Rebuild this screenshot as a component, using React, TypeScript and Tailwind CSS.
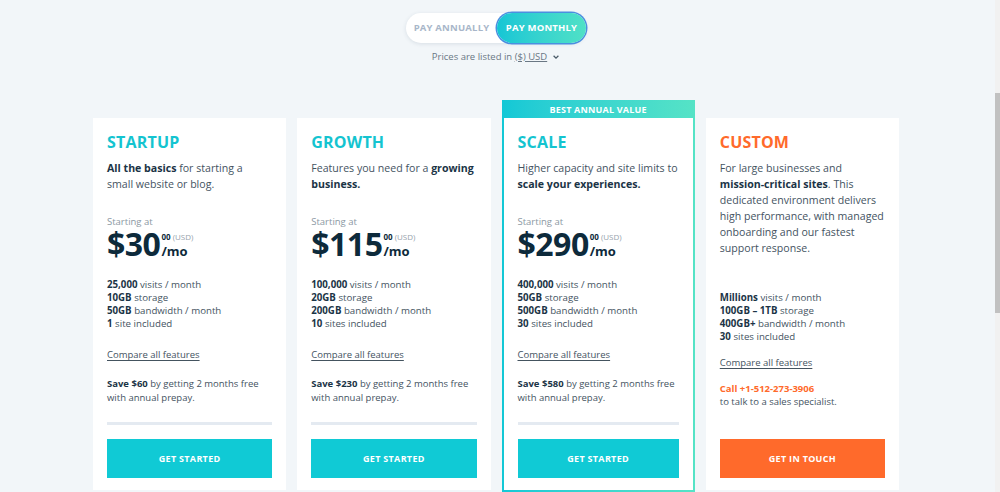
import React from "react"

interface Plan {
  name: string
  desc: React.ReactNode
  price: string
  features: [string, string][]
  save: string
}

const plans: Plan[] = [
  {
    name: "STARTUP",
    desc: (
      <>
        <b className="font-bold text-[#1b3446]">All the basics</b> for starting a
        <br />
        small website or blog.
      </>
    ),
    price: "$30",
    features: [
      ["25,000", "visits / month"],
      ["10GB", "storage"],
      ["50GB", "bandwidth / month"],
      ["1", "site included"],
    ],
    save: "$60",
  },
  {
    name: "GROWTH",
    desc: (
      <>
        Features you need for a <b className="font-bold text-[#1b3446]">growing business.</b>
      </>
    ),
    price: "$115",
    features: [
      ["100,000", "visits / month"],
      ["20GB", "storage"],
      ["200GB", "bandwidth / month"],
      ["10", "sites included"],
    ],
    save: "$230",
  },
  {
    name: "SCALE",
    desc: (
      <>
        Higher capacity and site limits to <b className="font-bold text-[#1b3446]">scale your experiences.</b>
      </>
    ),
    price: "$290",
    features: [
      ["400,000", "visits / month"],
      ["50GB", "storage"],
      ["500GB", "bandwidth / month"],
      ["30", "sites included"],
    ],
    save: "$580",
  },
]

function Features({ items }: { items: [string, string][] }) {
  return (
    <div className="text-[9.7px] leading-[13px] text-[#44535f]">
      {items.map(([b, rest]) => (
        <div key={b + rest}>
          <b className="font-bold text-[#1b3446]">{b}</b> {rest}
        </div>
      ))}
    </div>
  )
}

function PlanBody({ plan }: { plan: Plan }) {
  return (
    <div className="flex flex-col h-full bg-white px-[14px] pt-[14px] pb-[12px]">
      <h2 className="text-[16px] leading-[20px] font-bold text-[#14c4d0] tracking-[0.2px]">{plan.name}</h2>
      <p className="mt-[8px] text-[10.6px] leading-[16px] text-[#44535f]">{plan.desc}</p>
      <div className="mt-[23px] text-[9.5px] leading-[14px] text-[#8b98a3]">Starting at</div>
      <div className="flex items-start text-[#0d2a3b]">
        <span className="text-[32px] leading-[30px] font-bold tracking-[-0.5px]">{plan.price}</span>
        <div className="flex flex-col ml-[1px] mt-[3px]">
          <span className="text-[8px] leading-[10px] font-bold">
            00 <span className="font-normal text-[#97a3ad]">(USD)</span>
          </span>
          <span className="text-[13px] leading-[16px] font-bold mt-[1px]">/mo</span>
        </div>
      </div>
      <div className="mt-[19px]">
        <Features items={plan.features} />
      </div>
      <a className="mt-[18px] text-[9.5px] leading-[14px] text-[#44535f] underline underline-offset-2">
        Compare all features
      </a>
      <p className="mt-[15px] text-[9.5px] leading-[14px] text-[#44535f]">
        <b className="font-bold text-[#1b3446]">Save {plan.save}</b> by getting 2 months free with annual prepay.
      </p>
      <div className="mt-auto h-[3px] bg-[#e4eaf1]" />
      <button className="mt-[14px] h-[39px] bg-[#10cad5] text-white text-[9px] font-bold tracking-[0.3px]">
        GET STARTED
      </button>
    </div>
  )
}

export default function App() {
  return (
    <div
      className="relative h-[492px] overflow-hidden bg-[#f2f6f9] pr-[8px]"
      style={{ fontFamily: '"Open Sans", "Noto Sans", sans-serif' }}
    >
      <div className="flex flex-col items-center pt-[13px]">
        <div className="flex items-center h-[30px] w-[180px] rounded-full bg-white shadow-[0_1px_4px_rgba(30,60,90,0.12)]">
          <span className="flex-1 text-center text-[9.5px] font-bold text-[#a8b6c9] tracking-[0.2px]">
            PAY ANNUALLY
          </span>
          <span className="flex items-center justify-center h-[30px] w-[89px] rounded-full bg-gradient-to-r from-[#14c6d5] to-[#4fe1c6] ring-[1.5px] ring-[#4a8fe0] text-[9.5px] font-bold text-white tracking-[0.2px]">
            PAY MONTHLY
          </span>
        </div>
        <div className="mt-[7px] flex items-center gap-[3px] text-[9.5px] text-[#6a7784]">
          <span>
            Prices are listed in <span className="underline">($) USD</span>
          </span>
          <svg width="8" height="8" viewBox="0 0 10 10" className="ml-[2px]">
            <path d="M2 3.5 L5 6.5 L8 3.5" fill="none" stroke="#4a5a68" strokeWidth="1.6" />
          </svg>
        </div>
      </div>

      <div className="mx-auto mt-[54px] grid w-[806px] grid-cols-4 gap-[11px] items-stretch h-[372px]">
        <PlanBody plan={plans[0]} />
        <PlanBody plan={plans[1]} />
        <div className="-mt-[18px] -mb-[2px] flex flex-col bg-gradient-to-r from-[#12c8d6] to-[#55e3c6] px-[2px] pb-[2px]">
          <div className="h-[18px] flex items-center justify-center text-[9px] font-bold text-white tracking-[0.2px]">
            BEST ANNUAL VALUE
          </div>
          <div className="flex-1">
            <PlanBody plan={plans[2]} />
          </div>
        </div>
        <div className="flex flex-col h-full bg-white px-[14px] pt-[14px] pb-[12px]">
          <h2 className="text-[16px] leading-[20px] font-bold text-[#ff6a2b] tracking-[0.2px]">CUSTOM</h2>
          <p className="mt-[8px] text-[10.6px] leading-[16px] text-[#44535f]">
            For large businesses and <b className="font-bold text-[#1b3446]">mission-critical sites</b>. This
            dedicated environment delivers high performance, with managed onboarding and our fastest support
            response.
          </p>
          <div className="mt-[35px]">
            <Features
              items={[
                ["Millions", "visits / month"],
                ["100GB – 1TB", "storage"],
                ["400GB+", "bandwidth / month"],
                ["30", "sites included"],
              ]}
            />
          </div>
          <a className="mt-[13px] text-[9.5px] leading-[14px] text-[#44535f] underline underline-offset-2">
            Compare all features
          </a>
          <p className="mt-[12px] text-[9.5px] leading-[13px] text-[#44535f]">
            <b className="font-bold text-[#ff6a2b]">Call +1-512-273-3906</b>
            <br />
            to talk to a sales specialist.
          </p>
          <button className="mt-auto h-[39px] bg-[#ff6a2b] text-white text-[9px] font-bold tracking-[0.3px]">
            GET IN TOUCH
          </button>
        </div>
      </div>

      <div className="absolute right-0 top-0 h-full w-[5px] bg-[#f1f1f1]">
        <div className="mt-[93px] h-[220px] bg-[#c1c1c1]" />
      </div>
    </div>
  )
}
